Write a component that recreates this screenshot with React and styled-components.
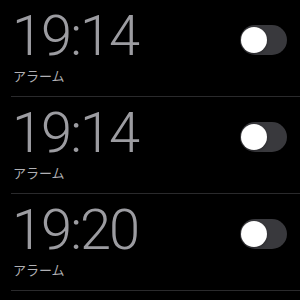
import React from 'react';
import styled, {createGlobalStyle} from 'styled-components';

const Global = createGlobalStyle`
    html, body {
        margin: 0;
        padding: 0;
        background: #000;
    }
    body {
        width: 300px;
        height: 300px;
        overflow: hidden;
        font-family: Roboto, 'Noto Sans CJK JP', sans-serif;
    }
`

const List = styled.div`
    display: flex;
    flex-direction: column;
    background: #000;
    height: 300px;
`

const Row = styled.div`
    display: flex;
    align-items: flex-start;
    justify-content: space-between;
    height: 96px;
    margin-left: 11px;
    padding: 0 13px 0 1px;
    border-bottom: 1px solid #2a2a2c;
    flex-shrink: 0;
`

const Info = styled.div`
    display: flex;
    flex-direction: column;
    padding-top: 4px;
`

const Time = styled.div`
    font-family: Roboto, sans-serif;
    font-weight: 300;
    font-size: 56px;
    line-height: 64px;
    letter-spacing: -2px;
    color: #9c9ca1;
`

const Label = styled.div`
    font-family: 'Noto Sans CJK JP', sans-serif;
    font-size: 13px;
    line-height: 16px;
    padding-left: 1px;
    color: #b0b0b4;
`

const Track = styled.div`
    position: relative;
    width: 47px;
    height: 30px;
    margin-top: 25px;
    border-radius: 15px;
    background: ${p => (p.$on ? '#34c759' : '#39393d')};
`

const Knob = styled.div`
    position: absolute;
    top: 2px;
    left: ${p => (p.$on ? '19px' : '1px')};
    width: 26px;
    height: 26px;
    border-radius: 50%;
    background: #fff;
    box-shadow: 0 1px 3px rgba(0, 0, 0, 0.3);
`

const alarms = [
    {time: '19:14', label: 'アラーム', on: false},
    {time: '19:14', label: 'アラーム', on: false},
    {time: '19:20', label: 'アラーム', on: false},
]

const App = () => (
    <List>
        <Global />
        {alarms.map((a, i) => (
            <Row key={i}>
                <Info>
                    <Time>{a.time}</Time>
                    <Label>{a.label}</Label>
                </Info>
                <Track $on={a.on}>
                    <Knob $on={a.on} />
                </Track>
            </Row>
        ))}
    </List>
)

export default App;
